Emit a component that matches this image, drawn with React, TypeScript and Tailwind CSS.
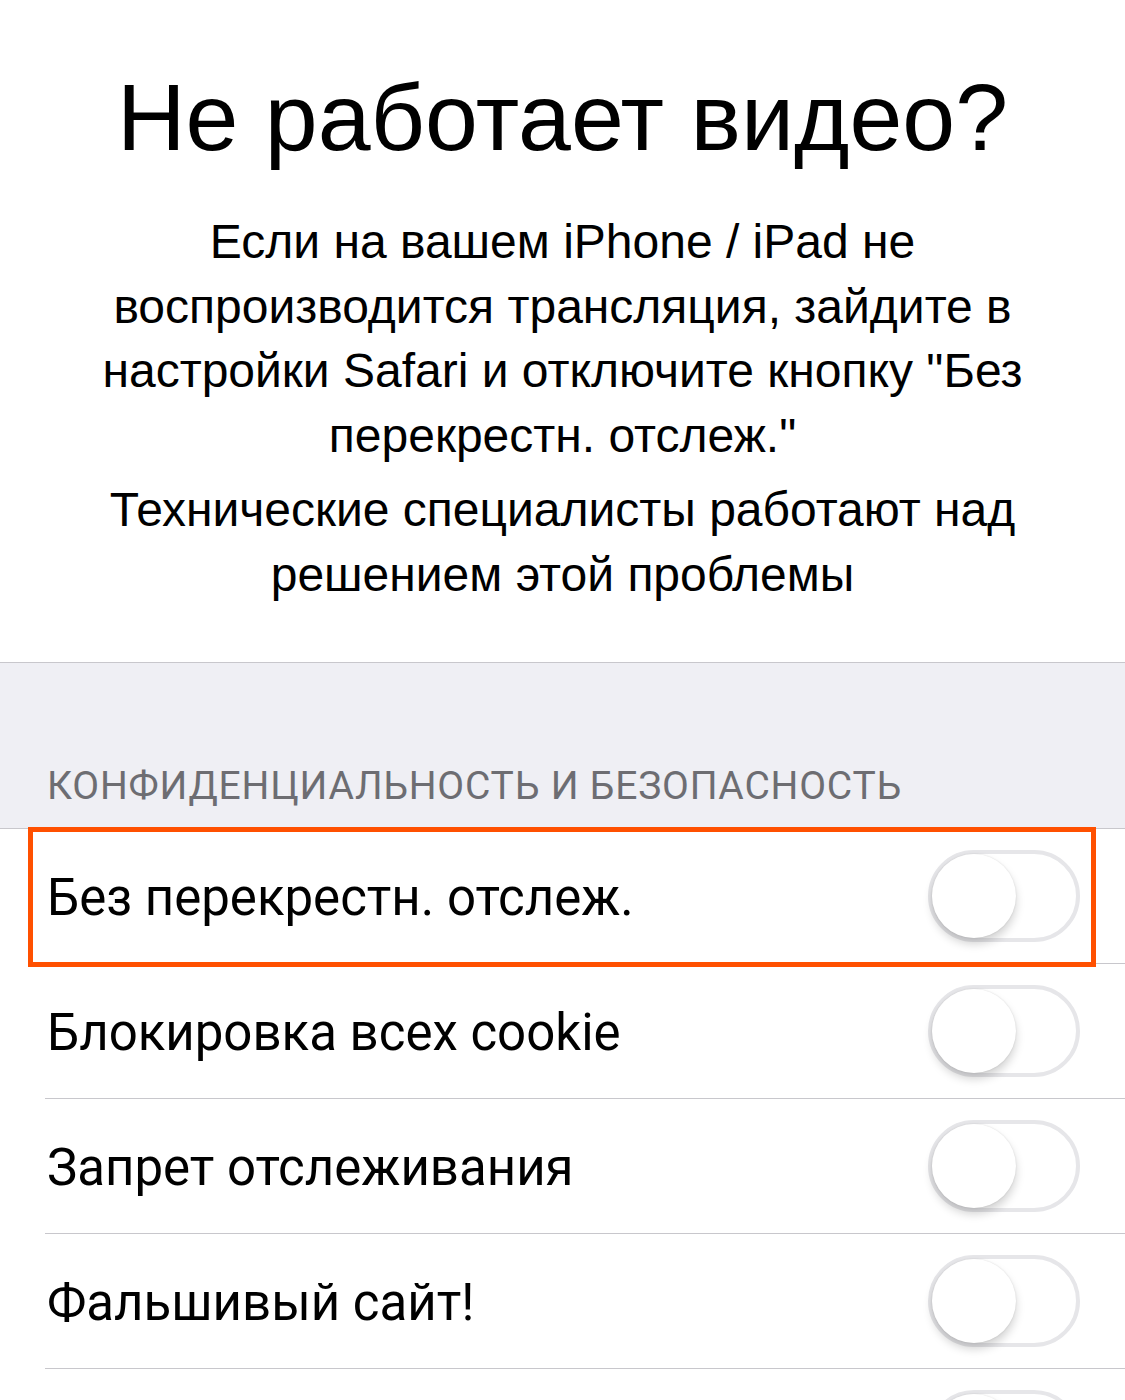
import React from "react";

// ============================================================================
// Data
// ============================================================================

const rows = [
  { label: "Без перекрестн. отслеж.", highlighted: true },
  { label: "Блокировка всех cookie" },
  { label: "Запрет отслеживания" },
  { label: "Фальшивый сайт!" },
  { label: "" },
];

// ============================================================================
// Toggle (off state, iOS style)
// ============================================================================

const Toggle: React.FC = () => (
  <div className="relative w-[152px] h-[92px] rounded-full border-[4px] border-[#e6e6e9] bg-white shrink-0">
    <div className="absolute left-0 top-0 w-[84px] h-[84px] rounded-full bg-white shadow-[0_6px_10px_rgba(0,0,0,0.18),0_0_2px_rgba(0,0,0,0.12)]"></div>
  </div>
);

// ============================================================================
// App
// ============================================================================

export default function App() {
  return (
    <div className="w-[1125px] h-[1400px] overflow-hidden bg-white">
      {/* Message block */}
      <div className="pt-[70px] pb-[55px] text-center text-black font-['Liberation_Sans',Arial,sans-serif]">
        <h1 className="text-[95px] leading-none">Не работает видео?</h1>
        <p className="mt-[45px] text-[48px] leading-[64.5px]">
          Если на вашем iPhone / iPad не
          <br />
          воспроизводится трансляция, зайдите в
          <br />
          настройки Safari и отключите кнопку "Без
          <br />
          перекрестн. отслеж."
        </p>
        <p className="mt-[10px] text-[48px] leading-[64.5px]">
          Технические специалисты работают над
          <br />
          решением этой проблемы
        </p>
      </div>

      {/* Settings group */}
      <div className="font-['Roboto','Liberation_Sans',sans-serif]">
        <div className="h-[167px] bg-[#efeff4] border-t border-b border-[#c8c7cc] flex items-end pl-[47px] pb-[22px]">
          <span className="text-[39px] leading-none text-[#6d6d72] tracking-[0.8px]">
            КОНФИДЕНЦИАЛЬНОСТЬ И БЕЗОПАСНОСТЬ
          </span>
        </div>

        {rows.map((row, i) => (
          <div key={i} className="relative pl-[45px]">
            <div className="h-[135px] flex items-center justify-between pr-[45px] border-b border-[#c8c7cc]">
              <span className="text-[51px] text-black pl-[2px] pt-[4px]">{row.label}</span>
              <Toggle />
            </div>
            {row.highlighted && (
              <div className="absolute left-[28px] right-[29px] top-[-2px] h-[140px] border-[5px] border-[#ff5000] pointer-events-none"></div>
            )}
          </div>
        ))}
      </div>
    </div>
  );
}
